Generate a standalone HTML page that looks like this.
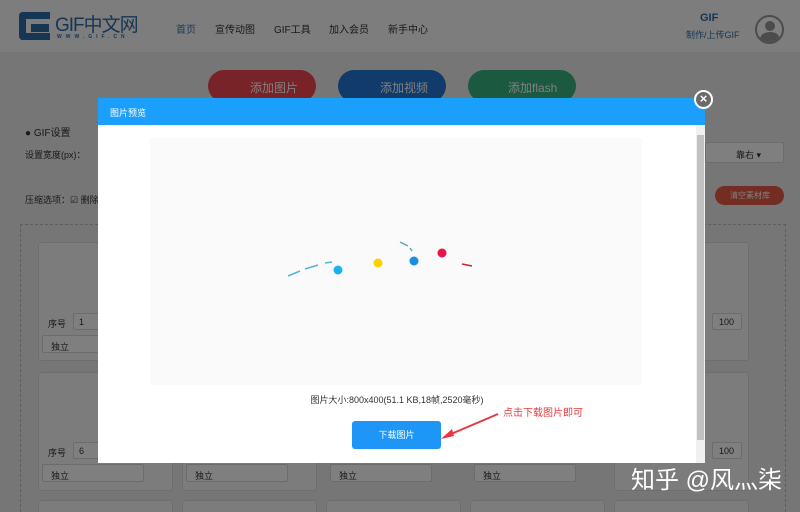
<!DOCTYPE html>
<html style="width:800px;height:512px;overflow:hidden;background:#767676"><head><meta charset="utf-8"><style>
*{margin:0;padding:0;box-sizing:border-box}
body{width:800px;height:512px;overflow:hidden;background:#ececec;font-family:"Liberation Sans","Noto Sans CJK SC",sans-serif;position:relative;font-size:9px;color:#333}
.a{position:absolute}
.card{position:absolute;background:#f9f9f9;border:1px solid #ddd;border-radius:3px;width:135px;height:119px}
.card.s{height:12px;border-bottom:none;border-radius:3px 3px 0 0}
.inp{position:absolute;border:1px solid #d8d8d8;background:#fff;border-radius:2px}
</style></head><body>
<div class="a" style="left:0;top:0;width:800px;height:52px;background:#fbfbfb"></div>
<div class="a" style="left:19px;top:12px;width:31px;height:28px;border:7px solid #2d6ca8;border-right:none;border-radius:4px 0 0 4px"></div>
<div class="a" style="left:31px;top:24px;width:18px;height:8px;background:#2d6ca8"></div>
<div class="a" style="left:55px;top:10px;font-size:19px;color:#2d6ca8;letter-spacing:-1px">GIF中文网</div>
<div class="a" style="left:57px;top:34px;font-size:5px;color:#2d6ca8;letter-spacing:4px;font-weight:bold">WWW.GIF.CN</div>
<div class="a" style="left:176px;top:21px;font-size:10px;color:#3a72b0">首页</div>
<div class="a" style="left:215px;top:21px;font-size:10px">宣传动图</div>
<div class="a" style="left:274px;top:21px;font-size:10px">GIF工具</div>
<div class="a" style="left:329px;top:21px;font-size:10px">加入会员</div>
<div class="a" style="left:388px;top:21px;font-size:10px">新手中心</div>
<div class="a" style="left:700px;top:12px;font-size:11px;font-weight:bold;color:#2d6ca8">GIF</div>
<div class="a" style="left:686px;top:28px;font-size:9px;color:#2d6ca8">制作/上传GIF</div>
<div class="a" style="left:755px;top:15px;width:29px;height:29px;border:2px solid #999;border-radius:50%;background:#fff;overflow:hidden"><div class="a" style="left:8px;top:4px;width:10px;height:10px;border-radius:50%;background:#999"></div><div class="a" style="left:3px;top:15px;width:20px;height:14px;border-radius:50%;background:#999"></div></div>
<div class="a" style="left:208px;top:70px;width:108px;height:32px;border-radius:16px;background:#f0474f;color:#fff;font-size:12px;padding:9px 0 0 42px">添加图片</div>
<div class="a" style="left:338px;top:70px;width:108px;height:32px;border-radius:16px;background:#2377d4;color:#fff;font-size:12px;padding:9px 0 0 42px">添加视频</div>
<div class="a" style="left:468px;top:70px;width:108px;height:32px;border-radius:16px;background:#36b383;color:#fff;font-size:12px;padding:9px 0 0 40px">添加flash</div>
<div class="a" style="left:25px;top:124px;font-size:10px">● GIF设置</div>
<div class="a" style="left:25px;top:148px">设置宽度(px)：</div>
<div class="a" style="left:25px;top:193px">压缩选项：☑ 删除</div>
<div class="inp" style="left:705px;top:142px;width:79px;height:21px;padding:5px 0 0 30px">靠右 ▾</div>
<div class="a" style="left:715px;top:186px;width:69px;height:19px;border-radius:10px;background:#e85a47;color:#fff;font-size:8px;padding:4px 0 0 15px">清空素材库</div>
<div class="a" style="left:20px;top:224px;width:766px;height:288px;border:1px dashed #bbb;border-bottom:none"></div>
<div class="card" style="left:38px;top:242px"></div><div class="card" style="left:38px;top:372px"></div><div class="card s" style="left:38px;top:500px"></div>
<div class="card" style="left:182px;top:372px"></div><div class="card s" style="left:182px;top:500px"></div>
<div class="card s" style="left:326px;top:500px"></div><div class="card s" style="left:470px;top:500px"></div><div class="card s" style="left:614px;top:500px"></div>
<div class="card" style="left:614px;top:242px"></div><div class="card" style="left:614px;top:372px"></div>
<div class="a" style="left:48px;top:317px">序号</div><div class="inp" style="left:73px;top:313px;width:30px;height:17px;padding:3px 5px">1</div>
<div class="a" style="left:48px;top:446px">序号</div><div class="inp" style="left:73px;top:442px;width:30px;height:17px;padding:3px 5px">6</div>
<div class="inp" style="left:42px;top:335px;width:60px;height:18px;padding:4px 0 0 8px">独立</div>
<div class="inp" style="left:42px;top:464px;width:102px;height:18px;padding:4px 0 0 8px">独立</div>
<div class="inp" style="left:186px;top:464px;width:102px;height:18px;padding:4px 0 0 8px">独立</div>
<div class="inp" style="left:330px;top:464px;width:102px;height:18px;padding:4px 0 0 8px">独立</div>
<div class="inp" style="left:474px;top:464px;width:102px;height:18px;padding:4px 0 0 8px">独立</div>
<div class="inp" style="left:712px;top:313px;width:30px;height:17px;padding:3px 0 0 6px">100</div>
<div class="inp" style="left:712px;top:442px;width:30px;height:17px;padding:3px 0 0 6px">100</div>
<div class="a" style="left:0;top:0;width:800px;height:512px;background:rgba(0,0,0,0.5)"></div>
<div class="a" style="left:98px;top:98px;width:607px;height:365px;background:#fff">
 <div class="a" style="left:0;top:0;width:607px;height:27px;background:#1a9ffd;color:#fff;font-size:9px;padding:8px 0 0 12px">图片预览</div>
 <div class="a" style="left:598px;top:27px;width:9px;height:338px;background:#f0f0f0"><div class="a" style="left:1px;top:10px;width:7px;height:305px;background:#c1c1c1"></div></div>
 <div class="a" style="left:52px;top:40px;width:492px;height:247px;background:#fafafa">
  <svg width="492" height="247" class="a" style="left:0;top:0">
   <path d="M138 138 L150 133 M155 131 L168 127 M175 125 L182 124" stroke="#4fb7d8" stroke-width="1.5" fill="none"/>
   <circle cx="188" cy="132" r="4.5" fill="#1ab1ec"/>
   <circle cx="228" cy="125" r="4.5" fill="#fcd200"/>
   <path d="M250 104 L258 108 M260 110 L262 113" stroke="#5ab" stroke-width="1.5"/>
   <circle cx="264" cy="123" r="4.5" fill="#1a8ee0"/>
   <circle cx="292" cy="115" r="4.5" fill="#e8154a"/>
   <path d="M312 126 L322 128" stroke="#c23" stroke-width="1.5"/>
  </svg>
 </div>
 <div class="a" style="left:0;top:295px;width:598px;text-align:center;font-size:9px;color:#333">图片大小:800x400(51.1 KB,18帧,2520毫秒)</div>
 <div class="a" style="left:254px;top:323px;width:89px;height:28px;border-radius:3px;background:#1e96f8;color:#fff;font-size:9px;text-align:center;line-height:28px">下载图片</div>
 <div class="a" style="left:405px;top:306px;font-size:10px;color:#e6393f">点击下载图片即可</div>
 <svg class="a" style="left:340px;top:312px" width="70" height="30"><path d="M60 4 L6 27" stroke="#e6393f" stroke-width="2"/><path d="M3 29 L14 19 L16 26 Z" fill="#e6393f"/></svg>
</div>
<div class="a" style="left:694px;top:90px;width:19px;height:19px;border-radius:50%;background:#6a6a6a;border:2px solid #fff;color:#fff;font-size:13px;text-align:center;line-height:14px;font-weight:bold">×</div>
<div class="a" style="left:631px;top:460px;font-size:24px;color:#fff">知乎 @风灬柒</div>
</body></html>
